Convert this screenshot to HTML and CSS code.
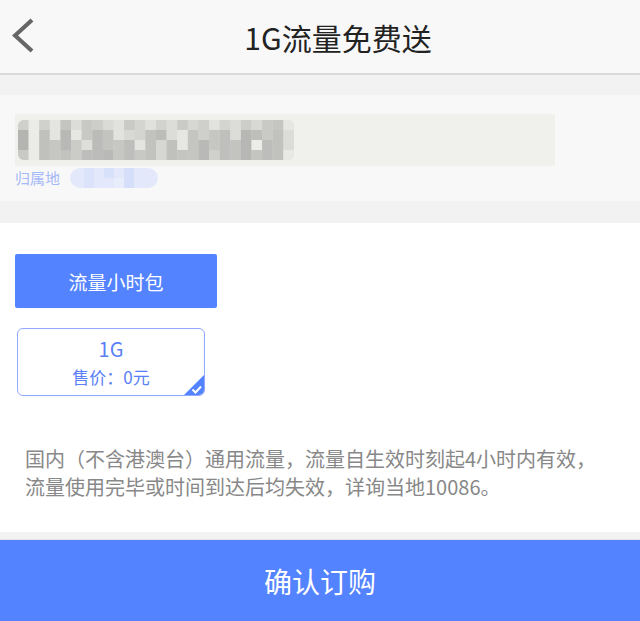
FILE: index.html
```html
<!DOCTYPE html>
<html lang="zh-CN">
<head>
<meta charset="utf-8">
<title>1G流量免费送</title>
<link rel="stylesheet" href="styles.css">
</head>
<body>
<div class="page">
  <header class="topbar">
    <svg class="back" width="24" height="36" viewBox="0 0 24 36">
      <polyline points="20,2 3,17.5 20,33" fill="none" stroke="#666" stroke-width="4.2"/>
    </svg>
    <h1 class="title">1G流量免费送</h1>
  </header>
  <div class="gap gap-top"></div>
  <section class="user">
    <div class="phone">
      <svg class="mosaic" width="276" height="40" viewBox="0 0 26 4" preserveAspectRatio="none">
        <rect x="0" y="0" width="26" height="4" fill="#dadad6"/>
        <rect x="0" y="0" width="1" height="1" fill="#cfcfcc"/>
        <rect x="0" y="1" width="1" height="2" fill="#b4b4b2"/>
        <rect x="0" y="3" width="1" height="1" fill="#c9c9c6"/>
        <rect x="1" y="0" width="1" height="4" fill="#ebebe7"/>
        <rect x="2" y="0" width="1" height="1" fill="#d0d0cd"/>
        <rect x="2" y="1" width="1" height="3" fill="#c0c0bd"/>
        <rect x="3" y="0" width="1" height="2" fill="#e4e4e0"/>
        <rect x="3" y="2" width="1" height="2" fill="#c6c6c3"/>
        <rect x="4" y="0" width="1" height="1" fill="#c4c4c1"/>
        <rect x="4" y="1" width="1" height="2" fill="#b8b8b6"/>
        <rect x="4" y="3" width="1" height="1" fill="#c2c2bf"/>
        <rect x="5" y="0" width="1" height="1" fill="#dcdcd8"/>
        <rect x="5" y="1" width="1" height="1" fill="#e6e6e2"/>
        <rect x="5" y="2" width="1" height="2" fill="#cbcbc8"/>
        <rect x="6" y="0" width="1" height="2" fill="#c8c8c5"/>
        <rect x="6" y="2" width="1" height="1" fill="#dededa"/>
        <rect x="6" y="3" width="1" height="1" fill="#bdbdbb"/>
        <rect x="7" y="0" width="1" height="1" fill="#cdcdca"/>
        <rect x="7" y="1" width="1" height="3" fill="#bbbbb9"/>
        <rect x="8" y="0" width="1" height="1" fill="#dadad6"/>
        <rect x="8" y="1" width="1" height="2" fill="#c3c3c0"/>
        <rect x="8" y="3" width="1" height="1" fill="#b9b9b7"/>
        <rect x="9" y="0" width="1" height="2" fill="#e2e2de"/>
        <rect x="9" y="2" width="1" height="2" fill="#c7c7c4"/>
        <rect x="10" y="0" width="1" height="1" fill="#c9c9c6"/>
        <rect x="10" y="1" width="1" height="1" fill="#d8d8d4"/>
        <rect x="10" y="2" width="1" height="2" fill="#bebebc"/>
        <rect x="11" y="0" width="1" height="2" fill="#d4d4d0"/>
        <rect x="11" y="2" width="1" height="1" fill="#e4e4e0"/>
        <rect x="11" y="3" width="1" height="1" fill="#c8c8c5"/>
        <rect x="12" y="0" width="1" height="1" fill="#e0e0dc"/>
        <rect x="12" y="1" width="1" height="3" fill="#c2c2bf"/>
        <rect x="13" y="0" width="1" height="1" fill="#d2d2cf"/>
        <rect x="13" y="1" width="1" height="1" fill="#bcbcba"/>
        <rect x="13" y="2" width="1" height="2" fill="#d6d6d2"/>
        <rect x="14" y="0" width="1" height="2" fill="#dcdcd8"/>
        <rect x="14" y="2" width="1" height="2" fill="#c0c0bd"/>
        <rect x="15" y="0" width="1" height="1" fill="#cacac7"/>
        <rect x="15" y="1" width="1" height="2" fill="#e6e6e2"/>
        <rect x="15" y="3" width="1" height="1" fill="#c4c4c1"/>
        <rect x="16" y="0" width="1" height="1" fill="#d6d6d2"/>
        <rect x="16" y="1" width="1" height="3" fill="#c5c5c2"/>
        <rect x="17" y="0" width="1" height="2" fill="#cfcfcc"/>
        <rect x="17" y="2" width="1" height="2" fill="#b9b9b7"/>
        <rect x="18" y="0" width="1" height="1" fill="#e2e2de"/>
        <rect x="18" y="1" width="1" height="2" fill="#c6c6c3"/>
        <rect x="18" y="3" width="1" height="1" fill="#d0d0cd"/>
        <rect x="19" y="0" width="1" height="1" fill="#d4d4d0"/>
        <rect x="19" y="1" width="1" height="3" fill="#bfbfbd"/>
        <rect x="20" y="0" width="1" height="2" fill="#dcdcd8"/>
        <rect x="20" y="2" width="1" height="2" fill="#c3c3c0"/>
        <rect x="21" y="0" width="1" height="1" fill="#cdcdca"/>
        <rect x="21" y="1" width="1" height="3" fill="#b7b7b5"/>
        <rect x="22" y="0" width="1" height="1" fill="#d8d8d4"/>
        <rect x="22" y="1" width="1" height="1" fill="#bebebc"/>
        <rect x="22" y="2" width="1" height="1" fill="#ececE8"/>
        <rect x="22" y="3" width="1" height="1" fill="#c4c4c1"/>
        <rect x="23" y="0" width="1" height="2" fill="#c9c9c6"/>
        <rect x="23" y="2" width="1" height="2" fill="#bdbdbb"/>
        <rect x="24" y="0" width="1" height="1" fill="#c5c5c2"/>
        <rect x="24" y="1" width="1" height="3" fill="#c1c1be"/>
        <rect x="25" y="0" width="1" height="1" fill="#e6e6e2"/>
        <rect x="25" y="1" width="1" height="2" fill="#dcdcd8"/>
        <rect x="25" y="3" width="1" height="1" fill="#e8e8e4"/>
      </svg>
    </div>
    <div class="region">
      <span class="region-label">归属地</span>
      <svg class="region-pill" width="88" height="20" viewBox="0 0 88 20">
        <rect x="0" y="0" width="88" height="20" rx="10" fill="#e3e9fb"/>
        <rect x="14" y="0" width="10" height="20" fill="#dbe3fb"/>
        <rect x="34" y="0" width="10" height="10" fill="#d8e1fa"/>
        <rect x="54" y="0" width="10" height="20" fill="#d5dffa"/>
        <rect x="44" y="10" width="10" height="10" fill="#e8edfc"/>
      </svg>
    </div>
  </section>
  <div class="gap gap-mid"></div>
  <main class="content">
    <button class="tab">流量小时包</button>
    <div class="packages">
      <div class="package selected">
        <div class="package-size">1G</div>
        <div class="package-price">售价：0元</div>
        <svg class="check" width="22" height="22" viewBox="0 0 22 22">
          <polygon points="22,0 22,22 0,22" fill="#5383ff"/>
          <polyline points="9.5,15.5 12.5,18.5 18,12.5" fill="none" stroke="#fff" stroke-width="2"/>
        </svg>
      </div>
    </div>
    <p class="desc">国内（不含港澳台）通用流量，流量自生效时刻起4小时内有效，流量使用完毕或时间到达后均失效，详询当地10086。</p>
  </main>
  <div class="gap gap-bottom"></div>
  <button class="confirm">确认订购</button>
</div>
</body>
</html>
```

FILE: styles.css
```css
html, body {
  margin: 0;
  padding: 0;
  background: #ffffff;
  overflow: hidden;
}

.page {
  width: 640px;
  height: 621px;
  display: flex;
  flex-direction: column;
  font-family: "Noto Sans CJK SC", "Noto Sans", sans-serif;
}

.topbar {
  height: 73px;
  flex: none;
  background: #f8f8f8;
  border-bottom: 2px solid #d9d9d9;
  display: flex;
  align-items: center;
  justify-content: center;
  position: relative;
}

.back {
  position: absolute;
  left: 12px;
  top: 18px;
}

.title {
  margin: 0 0 0 36px;
  font-size: 30px;
  font-weight: 400;
  color: #222;
  line-height: 1;
}

.gap {
  flex: none;
  background: #f2f2f2;
}

.gap-top { height: 20px; }
.gap-mid { height: 22px; }
.gap-bottom {
  height: 7px;
  border-bottom: 1px solid #e4e4e4;
}

.user {
  flex: none;
  height: 106px;
  box-sizing: border-box;
  background: #f8f8f8;
  padding: 19px 0 0 15px;
}

.phone {
  width: 540px;
  height: 52px;
  background: #f0f0ec;
  display: flex;
  align-items: center;
  padding-left: 3px;
  box-sizing: border-box;
}

.mosaic {
  display: block;
  border-radius: 6px;
}

.region {
  display: flex;
  align-items: center;
  height: 21px;
  margin-top: 1px;
}

.region-label {
  font-size: 15px;
  color: #a6b9f8;
  line-height: 1;
}

.region-pill {
  display: block;
  margin-left: 10px;
}

.content {
  flex: none;
  height: 309px;
  box-sizing: border-box;
  background: #fff;
  padding: 31px 0 0 0;
}

.tab {
  display: block;
  margin-left: 15px;
  width: 202px;
  height: 54px;
  border: none;
  border-radius: 2px;
  background: #5383ff;
  color: #fff;
  font-family: "Noto Sans CJK SC", sans-serif;
  font-size: 19px;
  padding: 0;
}

.packages {
  display: flex;
  padding: 20px 0 0 17px;
}

.package {
  position: relative;
  width: 188px;
  height: 68px;
  box-sizing: border-box;
  border: 1px solid #91aaff;
  border-radius: 6px;
  overflow: hidden;
  display: flex;
  flex-direction: column;
  align-items: center;
  color: #5a7ff7;
}

.package-size {
  font-size: 20px;
  line-height: 24px;
  margin-top: 8px;
}

.package-price {
  font-size: 17px;
  line-height: 24px;
  margin-top: 4px;
}

.check {
  position: absolute;
  right: -1px;
  bottom: -1px;
  display: block;
}

.desc {
  margin: 49px 0 0 0;
  padding: 0 35px 0 25px;
  font-size: 20px;
  line-height: 28px;
  color: #888;
}

.confirm {
  flex: 1;
  border: none;
  background: #5383ff;
  color: #fff;
  font-family: "Noto Sans CJK SC", sans-serif;
  font-size: 28px;
  padding: 0;
  width: 100%;
}
```
